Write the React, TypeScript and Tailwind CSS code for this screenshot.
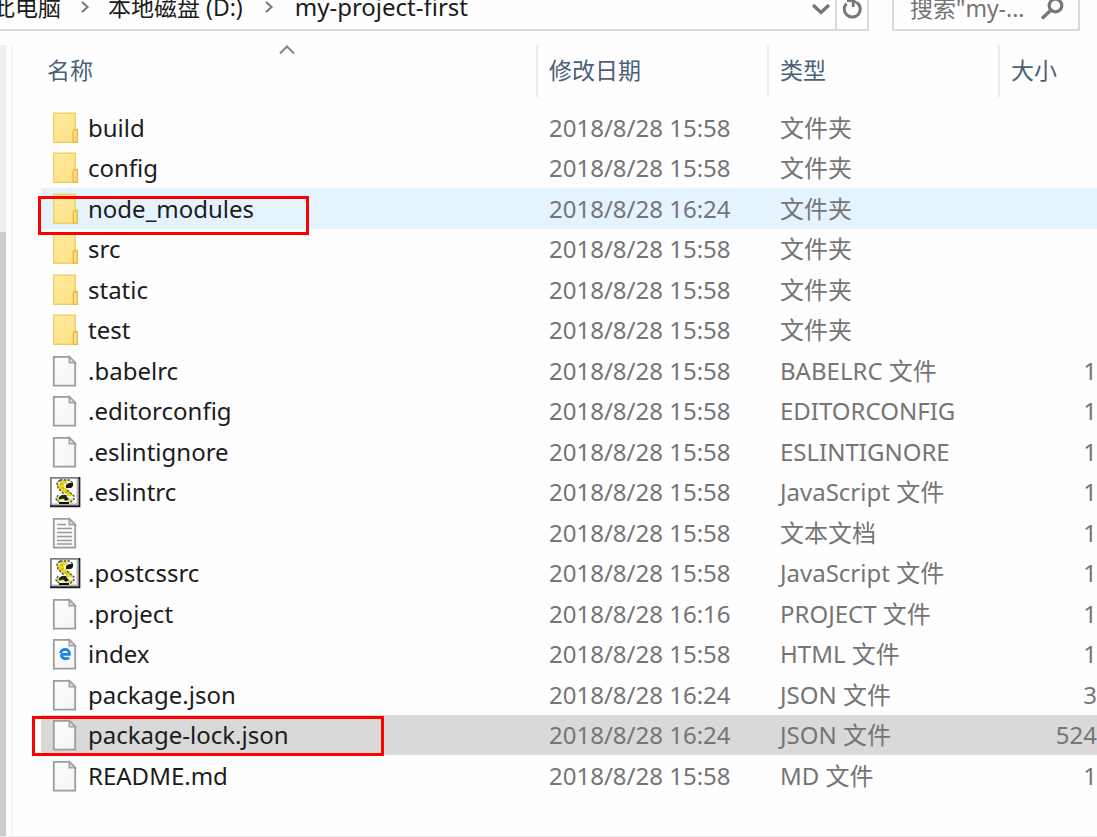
import React from "react";

type Kind = "folder" | "file" | "script" | "text" | "html";

interface Entry {
  name: string;
  kind: Kind;
  date: string;
  type: string;
  size: string;
  row?: string;
  mark?: string;
}

const T1 = "2018/8/28 15:58";
const T2 = "2018/8/28 16:24";

const entries: Entry[] = [
  { name: "build", kind: "folder", date: T1, type: "文件夹", size: "" },
  { name: "config", kind: "folder", date: T1, type: "文件夹", size: "" },
  {
    name: "node_modules", kind: "folder", date: T2, type: "文件夹", size: "",
    row: "bg-[#e5f3ff]", mark: "-left-[3px] top-2 h-[39px] w-[271px]",
  },
  { name: "src", kind: "folder", date: T1, type: "文件夹", size: "" },
  { name: "static", kind: "folder", date: T1, type: "文件夹", size: "" },
  { name: "test", kind: "folder", date: T1, type: "文件夹", size: "" },
  { name: ".babelrc", kind: "file", date: T1, type: "BABELRC 文件", size: "1" },
  { name: ".editorconfig", kind: "file", date: T1, type: "EDITORCONFIG", size: "1" },
  { name: ".eslintignore", kind: "file", date: T1, type: "ESLINTIGNORE", size: "1" },
  { name: ".eslintrc", kind: "script", date: T1, type: "JavaScript 文件", size: "1" },
  { name: "", kind: "text", date: T1, type: "文本文档", size: "1" },
  { name: ".postcssrc", kind: "script", date: T1, type: "JavaScript 文件", size: "1" },
  { name: ".project", kind: "file", date: "2018/8/28 16:16", type: "PROJECT 文件", size: "1" },
  { name: "index", kind: "html", date: T1, type: "HTML 文件", size: "1" },
  { name: "package.json", kind: "file", date: T2, type: "JSON 文件", size: "3" },
  {
    name: "package-lock.json", kind: "file", date: T2, type: "JSON 文件", size: "524",
    row: "bg-[#d9d9d9]", mark: "-left-[9px] top-px h-10 w-[352px]",
  },
  { name: "README.md", kind: "file", date: T1, type: "MD 文件", size: "1" },
];

function FolderIcon() {
  return (
    <svg width="32" height="32" viewBox="0 0 32 32" aria-hidden="true">
      <defs>
        <linearGradient id="folder" x1="0" y1="0" x2="1" y2="1">
          <stop offset="0" stopColor="#ffeca4" />
          <stop offset="1" stopColor="#fddf80" />
        </linearGradient>
      </defs>
      <path d="M4.7 1.2H26.3V30.3H4.7Z" fill="url(#folder)" stroke="#f0d068" strokeWidth="1.4" />
      <path d="M24.3 30.3V19.5L25.6 17.5H28.3V30.3Z" fill="#fbe08a" stroke="#e5be48" strokeWidth="1.5" />
    </svg>
  );
}

function PageIcon({ kind }: { kind: Kind }) {
  return (
    <svg width="32" height="32" viewBox="0 0 32 32" aria-hidden="true">
      <defs>
        <linearGradient id="page" x1="0" y1="0" x2="1" y2="1">
          <stop offset="0" stopColor="#fdfdfd" />
          <stop offset="1" stopColor="#f1f4f6" />
        </linearGradient>
      </defs>
      <path d="M4.8 1.8H20.5L26.2 7.5V30.6H4.8Z" fill="url(#page)" stroke="#9b9d9f" strokeWidth="1.8" />
      <path d="M20.3 1.8V7.8H26.2Z" fill="#dcdcdc" stroke="#a0a2a4" strokeWidth="1.6" />
      {kind === "text" && (
        <path d="M8 7.5H17M8 11.5H23M8 15.5H23M8 19.5H23M8 23.5H23M8 27H23" stroke="#9c9c9c" strokeWidth="1.6" fill="none" />
      )}
      {kind === "html" && (
        <path
          d="M12.2 16.3H20.4C20.6 13.4 19 11.4 16.4 11.4C13.7 11.4 12 13 11.4 15.2M12.4 16.3C12.4 19.4 14.3 20.7 16.9 20.7C18.2 20.7 19.4 20.4 20.3 19.8"
          fill="none" stroke="#1683e0" strokeWidth="2.8"
        />
      )}
    </svg>
  );
}

function ScriptIcon() {
  return (
    <svg width="32" height="32" viewBox="0 0 32 32" aria-hidden="true">
      <path d="M1 1H31V31H1Z" fill="#fff" />
      <path d="M1.9 30V1.9H30" fill="none" stroke="#808080" strokeWidth="1.8" />
      <path d="M1 30.2H30.4V1" fill="none" stroke="#1c1c1c" strokeWidth="1.9" />
      <path d="M3 28.2H28.4V3" fill="none" stroke="#b5b5b5" strokeWidth="1.6" />
      <path d="M11 4H20L23 7L20 11L17 12L22 17L25 20V23L21 26H11L8 22L11 19H15L9 13L7 8Z" fill="#f4f2d0" />
      <path d="M11 5H18V8H15V12H18V15H21V18H23V20H17V17H13V14H10V11H8V8H11Z" fill="#e3dc22" />
      <path d="M8 21H14V24H10V26H8ZM19 23H23V26H19Z" fill="#e3dc22" />
      <path d="M11 4L8 7L9 12L15 18M11 4H20L24 7M18 14L25 20V23L21 27M9 19L7 23L10 26" fill="none" stroke="#48483c" strokeWidth="1.3" strokeDasharray="2.5 1.2" />
      <path d="M17 9L20 7H24V10L22 12H17Z" fill="#181818" />
      <path d="M13 19H17L18 21L20 23L17 25L14 22.5L10 23.5V21Z" fill="#202020" />
      <path d="M10 27H20" stroke="#111" strokeWidth="2" />
      <path d="M11 8H14M12 12H15M16 16H19" stroke="#aaa42a" strokeWidth="1" />
    </svg>
  );
}

function EntryIcon({ kind }: { kind: Kind }) {
  if (kind === "folder") return <FolderIcon />;
  if (kind === "script") return <ScriptIcon />;
  return <PageIcon kind={kind} />;
}

function Chevron() {
  return (
    <svg width="10" height="12" viewBox="0 0 10 12" aria-hidden="true">
      <path d="M2 1L7.5 6L2 11" fill="none" stroke="#7d7d7d" strokeWidth="2.2" />
    </svg>
  );
}

function Heading({ label }: { label: string }) {
  return (
    <th scope="col" className="p-0 align-top font-normal">
      <div className="flex h-[52px] items-center border-l-2 border-[#ebebeb] pb-px pl-[11px] text-left">{label}</div>
    </th>
  );
}

export default function App() {
  return (
    <div className="flex min-h-screen flex-col overflow-hidden border-b border-[#ececec] bg-[#fefefe] font-['Noto_Sans','Noto_Sans_CJK_SC',sans-serif] text-[23px] text-[#1c1c1c]">
      <header className="flex h-[31px] items-end overflow-hidden pr-[17px]">
        <div className="flex h-[46px] min-w-0 flex-1 border-r-2 border-b-2 border-[#dadada]">
          <nav aria-label="Path" className="-ml-2 flex min-w-0 flex-1 items-center whitespace-nowrap">
            <a href="#pc">此电脑</a>
            <span className="flex w-[47px] justify-center"><Chevron /></span>
            <a href="#d">本地磁盘 (D:)</a>
            <span className="flex w-[52px] justify-center"><Chevron /></span>
            <a href="#project" className="text-2xl">my-project-first</a>
          </nav>
          <button aria-label="History" className="flex w-7 items-center justify-center pt-1">
            <svg width="20" height="14" viewBox="0 0 20 14" aria-hidden="true">
              <path d="M2 3L10 10.5L18 3" fill="none" stroke="#767676" strokeWidth="3.4" />
            </svg>
          </button>
          <button aria-label="Refresh" className="flex w-8 items-center justify-center border-l-2 border-[#dadada]">
            <svg width="24" height="26" viewBox="0 0 24 26" aria-hidden="true">
              <path d="M6.5 9.5A8 8 0 1 0 17.5 9" fill="none" stroke="#777" strokeWidth="3" />
              <path d="M7 6.5H13.2V13" fill="none" stroke="#777" strokeWidth="2.8" />
              <path d="M13 6.5L18 9.5" stroke="#777" strokeWidth="2.4" />
            </svg>
          </button>
        </div>
        <div className="ml-[23px] flex h-[46px] w-[188px] items-center border-2 border-[#dadada] pr-[14px] pl-4">
          <input aria-label="Search" placeholder={'搜索"my-...'} className="min-w-0 flex-1 bg-transparent outline-none placeholder:text-[#747474]" />
          <button aria-label="Start search">
            <svg width="24" height="26" viewBox="0 0 24 26" aria-hidden="true">
              <circle cx="15.5" cy="10.5" r="6.3" fill="none" stroke="#777" strokeWidth="3.2" />
              <path d="M11 15L2 23.5" stroke="#777" strokeWidth="3.4" />
            </svg>
          </button>
        </div>
      </header>

      <main className="flex flex-1 pt-[14px]">
        <div className="flex w-[6px] flex-col bg-[#cdcdcd]">
          <div className="h-[187px] bg-[#f0f0f0]" />
        </div>
        <div className="ml-[5px] w-[2px] bg-[#f7f7f7]" />
        <div className="min-w-0 flex-1 pl-7">
          <table className="w-full table-fixed border-collapse whitespace-nowrap">
            <colgroup>
              <col />
              <col className="w-[231px]" />
              <col className="w-[231px]" />
              <col className="w-[99px]" />
            </colgroup>
            <thead className="text-[#4c607a]">
              <tr className="h-[62px]">
                <th scope="col" aria-sort="ascending" className="relative p-0 align-top font-normal">
                  <div className="flex h-[52px] items-center pb-px pl-[6px]">名称</div>
                  <svg width="16" height="10" viewBox="0 0 16 10" className="absolute top-0 left-[238px]" aria-hidden="true">
                    <path d="M1 8.5L8 1.5L15 8.5" fill="none" stroke="#858585" strokeWidth="2" />
                  </svg>
                </th>
                <Heading label="修改日期" />
                <Heading label="类型" />
                <Heading label="大小" />
              </tr>
            </thead>
            <tbody className="text-2xl leading-8 text-[#757575]">
              {entries.map((e, i) => (
                <tr key={i} className={`odd:h-[41px] even:h-10 ${e.row ?? ""}`}>
                  <td className="relative p-0 text-[#1c1c1c]">
                    <div className="flex items-center gap-[7px] pl-2">
                      <EntryIcon kind={e.kind} />
                      {e.name}
                    </div>
                    {e.mark && <div className={`absolute z-10 border-[3px] border-[#fe0000] ${e.mark}`} />}
                  </td>
                  <td className="p-0 pl-[13px]">{e.date}</td>
                  <td className="p-0 pl-[13px]">{e.type}</td>
                  <td className="p-0 text-right">{e.size}</td>
                </tr>
              ))}
            </tbody>
          </table>
        </div>
      </main>
    </div>
  );
}
